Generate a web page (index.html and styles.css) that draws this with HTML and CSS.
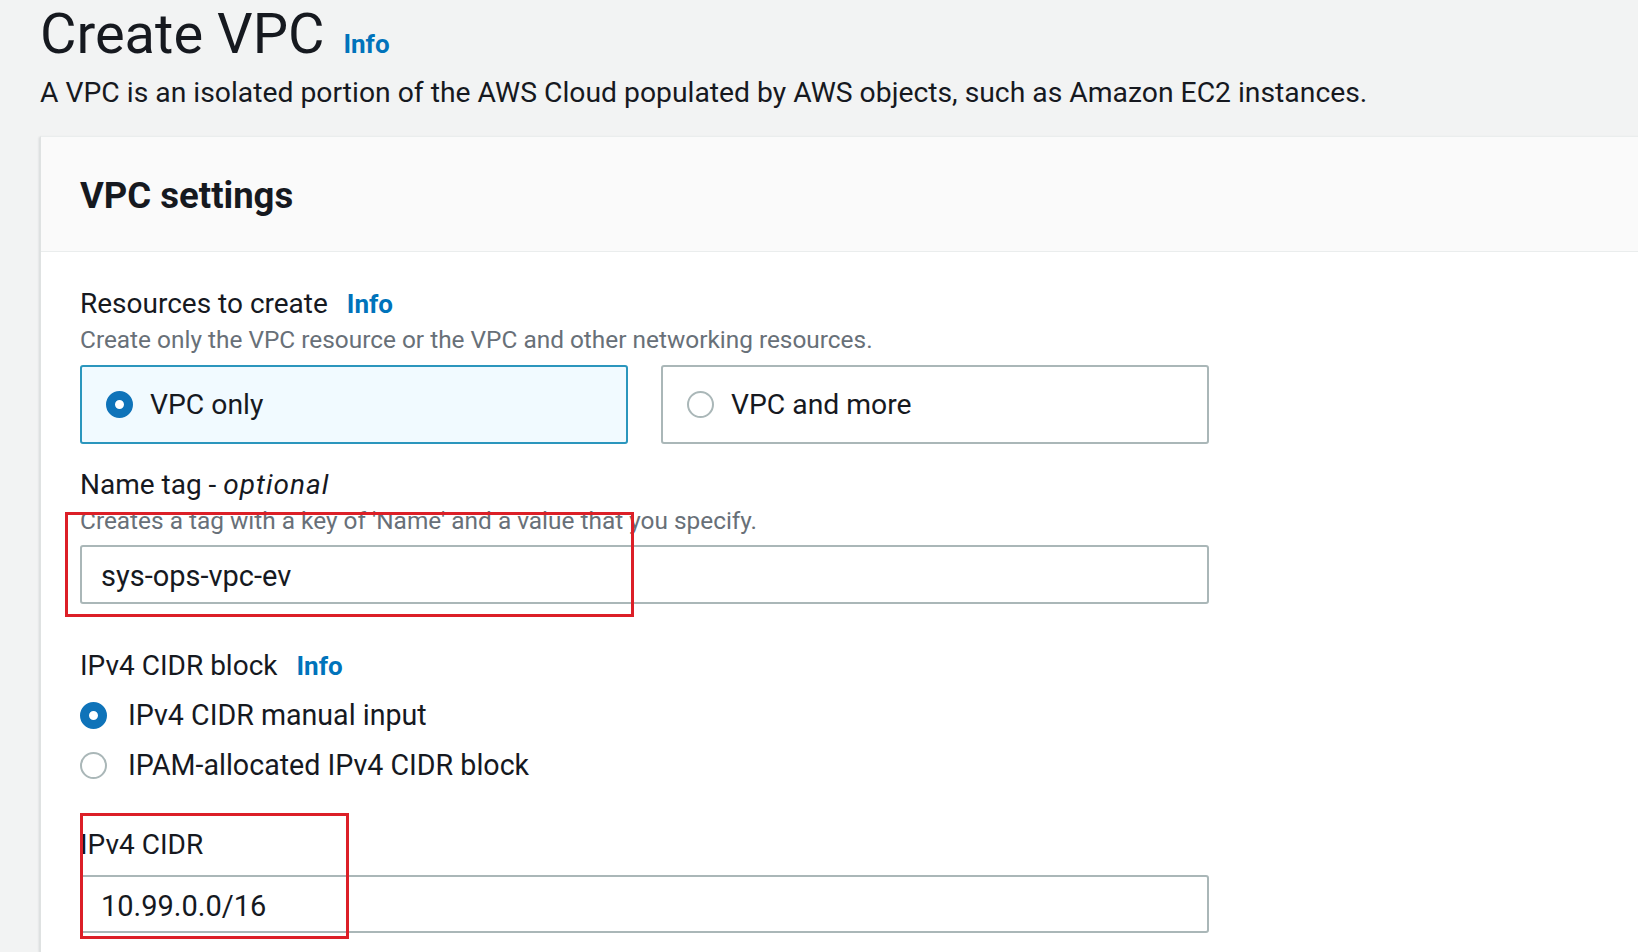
FILE: index.html
```html
<!DOCTYPE html>
<html lang="en">
<head>
<meta charset="utf-8">
<title>Create VPC</title>
<link rel="stylesheet" href="styles.css">
</head>
<body>
<div class="page">
  <header class="page-header">
    <div class="title-row">
      <h1 class="title">Create VPC</h1>
      <a class="info info-title" href="#">Info</a>
    </div>
    <p class="page-desc">A VPC is an isolated portion of the AWS Cloud populated by AWS objects, such as Amazon EC2 instances.</p>
  </header>

  <section class="panel">
    <div class="panel-head">
      <h2 class="panel-title">VPC settings</h2>
    </div>
    <div class="panel-body">
      <div class="form">
        <div class="field">
          <div class="label-row"><span class="label">Resources to create</span><a class="info" href="#">Info</a></div>
          <div class="hint">Create only the VPC resource or the VPC and other networking resources.</div>
          <div class="tiles">
            <div class="tile tile-selected"><span class="radio radio-on"></span><span class="tile-text">VPC only</span></div>
            <div class="tile"><span class="radio"></span><span class="tile-text">VPC and more</span></div>
          </div>
        </div>

        <div class="field field-name">
          <div class="label-row"><span class="label">Name tag - <em>optional</em></span></div>
          <div class="hint">Creates a tag with a key of 'Name' and a value that you specify.</div>
          <div class="input input-hinted">sys-ops-vpc-ev</div>
        </div>

        <div class="field field-cidr-block">
          <div class="label-row"><span class="label">IPv4 CIDR block</span><a class="info" href="#">Info</a></div>
          <div class="radio-group">
            <div class="radio-row"><span class="radio radio-on"></span><span class="radio-text">IPv4 CIDR manual input</span></div>
            <div class="radio-row"><span class="radio"></span><span class="radio-text">IPAM-allocated IPv4 CIDR block</span></div>
          </div>
        </div>

        <div class="field field-cidr">
          <div class="label-row"><span class="label">IPv4 CIDR</span></div>
          <div class="input input-plain">10.99.0.0/16</div>
        </div>
      </div>
    </div>
  </section>

  <div class="mark mark-name"></div>
  <div class="mark mark-cidr"></div>
</div>
</body>
</html>
```
FILE: styles.css
```css
* { box-sizing: border-box; }

html, body {
  margin: 0;
  padding: 0;
  background: #f2f3f3;
  overflow: hidden;
}

body {
  font-family: Roboto, "Open Sans", "Liberation Sans", sans-serif;
  color: #16191f;
}

.page {
  position: relative;
  height: 952px;
  overflow: hidden;
  padding: 2px 0 0 40px;
}

/* ---------- header ---------- */
.title-row {
  display: flex;
  align-items: baseline;
  gap: 19px;
}

.title {
  margin: 0;
  font-size: 56px;
  line-height: 64px;
  font-weight: 400;
}

.info {
  color: #0073bb;
  font-weight: 700;
  font-size: 26px;
  text-decoration: none;
}

.page-desc {
  margin: 9px 0 0;
  font-size: 28.3px;
  line-height: 36px;
}

/* ---------- panel ---------- */
.panel {
  margin-top: 25px;
  margin-right: -40px;
  background: #ffffff;
  border-left: 1px solid #dfe2e2;
  border-top: 1px solid #eaeded;
  box-shadow: -1px 1px 2px rgba(0, 28, 36, 0.12);
  height: 816px;
}

.panel-head {
  background: #fafafa;
  border-bottom: 1px solid #eaeded;
  padding: 37px 39px 33px;
}

.panel-title {
  margin: 0;
  font-size: 36.5px;
  line-height: 44px;
  font-weight: 700;
}

.panel-body {
  padding: 34px 39px 0;
}

.form {
  width: 1129px;
}

/* ---------- fields ---------- */
.label-row {
  display: flex;
  align-items: baseline;
  gap: 19px;
  line-height: 36px;
}

.label {
  font-size: 28px;
}

.label em {
  font-style: italic;
  letter-spacing: 1px;
}

.hint {
  margin-top: 2px;
  font-size: 24.4px;
  line-height: 32px;
  color: #687078;
}

.field-name { margin-top: 23px; }
.field-cidr-block { margin-top: 44px; }
.field-cidr { margin-top: 44px; }

/* ---------- tiles ---------- */
.tiles {
  margin-top: 9px;
  display: grid;
  grid-template-columns: 1fr 1fr;
  gap: 33px;
}

.tile {
  height: 79px;
  border: 2px solid #aab7b8;
  border-radius: 3px;
  background: #ffffff;
  display: flex;
  align-items: center;
  gap: 17px;
  padding-left: 24px;
}

.tile-selected {
  border-color: #2b96bd;
  background: #f1faff;
}

.tile-text {
  font-size: 28.3px;
  line-height: 36px;
}

/* ---------- radios ---------- */
.radio {
  flex: none;
  width: 27px;
  height: 27px;
  border-radius: 50%;
  border: 2px solid #aab7b8;
  background: #ffffff;
}

.radio-on {
  border: 9px solid #0f73b9;
}

.radio-group {
  margin-top: 13px;
  display: flex;
  flex-direction: column;
  gap: 14px;
}

.radio-row {
  display: flex;
  align-items: center;
  gap: 21px;
  height: 36px;
}

.radio-text {
  font-size: 28.6px;
  line-height: 36px;
}

/* ---------- inputs ---------- */
.input {
  height: 59px;
  border: 2px solid #aab7b8;
  border-radius: 3px;
  background: #ffffff;
  padding: 3px 19px 0;
  display: flex;
  align-items: center;
  font-size: 29px;
  line-height: 36px;
}

.input-hinted { margin-top: 8px; }
.input-plain { margin-top: 12px; height: 58px; }

/* ---------- annotation boxes ---------- */
.mark {
  position: absolute;
  border: 3px solid #dc1f27;
  pointer-events: none;
}

.mark-name {
  left: 65px;
  top: 512px;
  width: 569px;
  height: 105px;
}

.mark-cidr {
  left: 80px;
  top: 813px;
  width: 269px;
  height: 126px;
}
```
